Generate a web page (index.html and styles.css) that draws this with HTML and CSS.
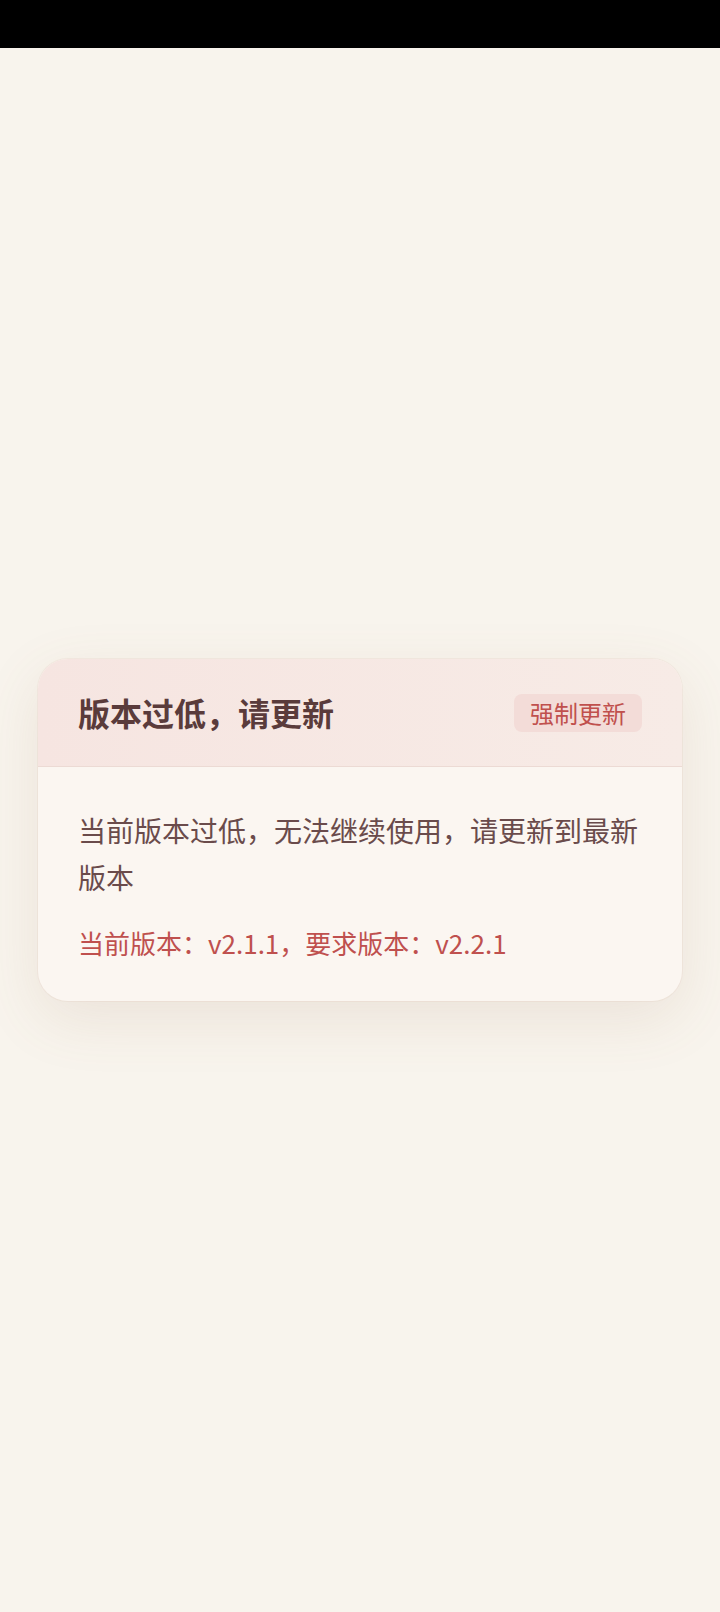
FILE: index.html
```html
<!DOCTYPE html>
<html lang="zh-CN">
<head>
    <meta charset="UTF-8">
    <meta name="viewport" content="width=device-width, initial-scale=1.0">
    <title>版本过低</title>
    <link rel="stylesheet" href="styles.css">
</head>
<body>
    <div class="status-bar"></div>

    <div class="page">
        <div class="card">
            <div class="card-header">
                <h2>版本过低，请更新</h2>
                <span class="badge">强制更新</span>
            </div>
            <div class="card-body">
                <p class="message">当前版本过低，无法继续使用，请更新到最新版本</p>
                <p class="version">当前版本：v2.1.1，要求版本：v2.2.1</p>
            </div>
        </div>
    </div>
</body>
</html>
```

FILE: styles.css
```css
html, body {
    height: 100%;
}
body {
    font-family: "Noto Sans CJK SC", "Noto Sans", sans-serif;
    background-color: #f8f4ed;
    margin: 0;
    padding: 0;
    display: flex;
    flex-direction: column;
}
.status-bar {
    height: 48px;
    background-color: #000;
    flex-shrink: 0;
}
.page {
    flex: 1;
    display: flex;
    align-items: center;
    justify-content: center;
    padding: 0 38px;
}
.card {
    width: 100%;
    background-color: #fbf6f1;
    border-radius: 30px;
    overflow: hidden;
    box-shadow: 0 18px 60px rgba(150, 105, 70, 0.12), 0 0 0 1px rgba(235, 215, 205, 0.3);
}
.card-header {
    height: 107px;
    padding: 0 40px;
    display: flex;
    align-items: center;
    justify-content: space-between;
    background: linear-gradient(90deg, #f6e5e1 0%, #f7ebe6 100%);
    border-bottom: 1px solid #ecdad4;
}
h2 {
    margin: 0;
    font-size: 32px;
    font-weight: 700;
    color: #5a3b3b;
    line-height: 1.2;
}
.badge {
    font-size: 24px;
    color: #c0504d;
    background-color: #f3dcd8;
    border-radius: 8px;
    padding: 0 16px;
    line-height: 38px;
}
.card-body {
    padding: 40px 40px 38px;
}
.message {
    margin: 0;
    font-size: 28px;
    line-height: 47px;
    color: #6a4b4b;
}
.version {
    margin: 22px 0 0;
    font-size: 26px;
    line-height: 40px;
    color: #bf504e;
}
```
